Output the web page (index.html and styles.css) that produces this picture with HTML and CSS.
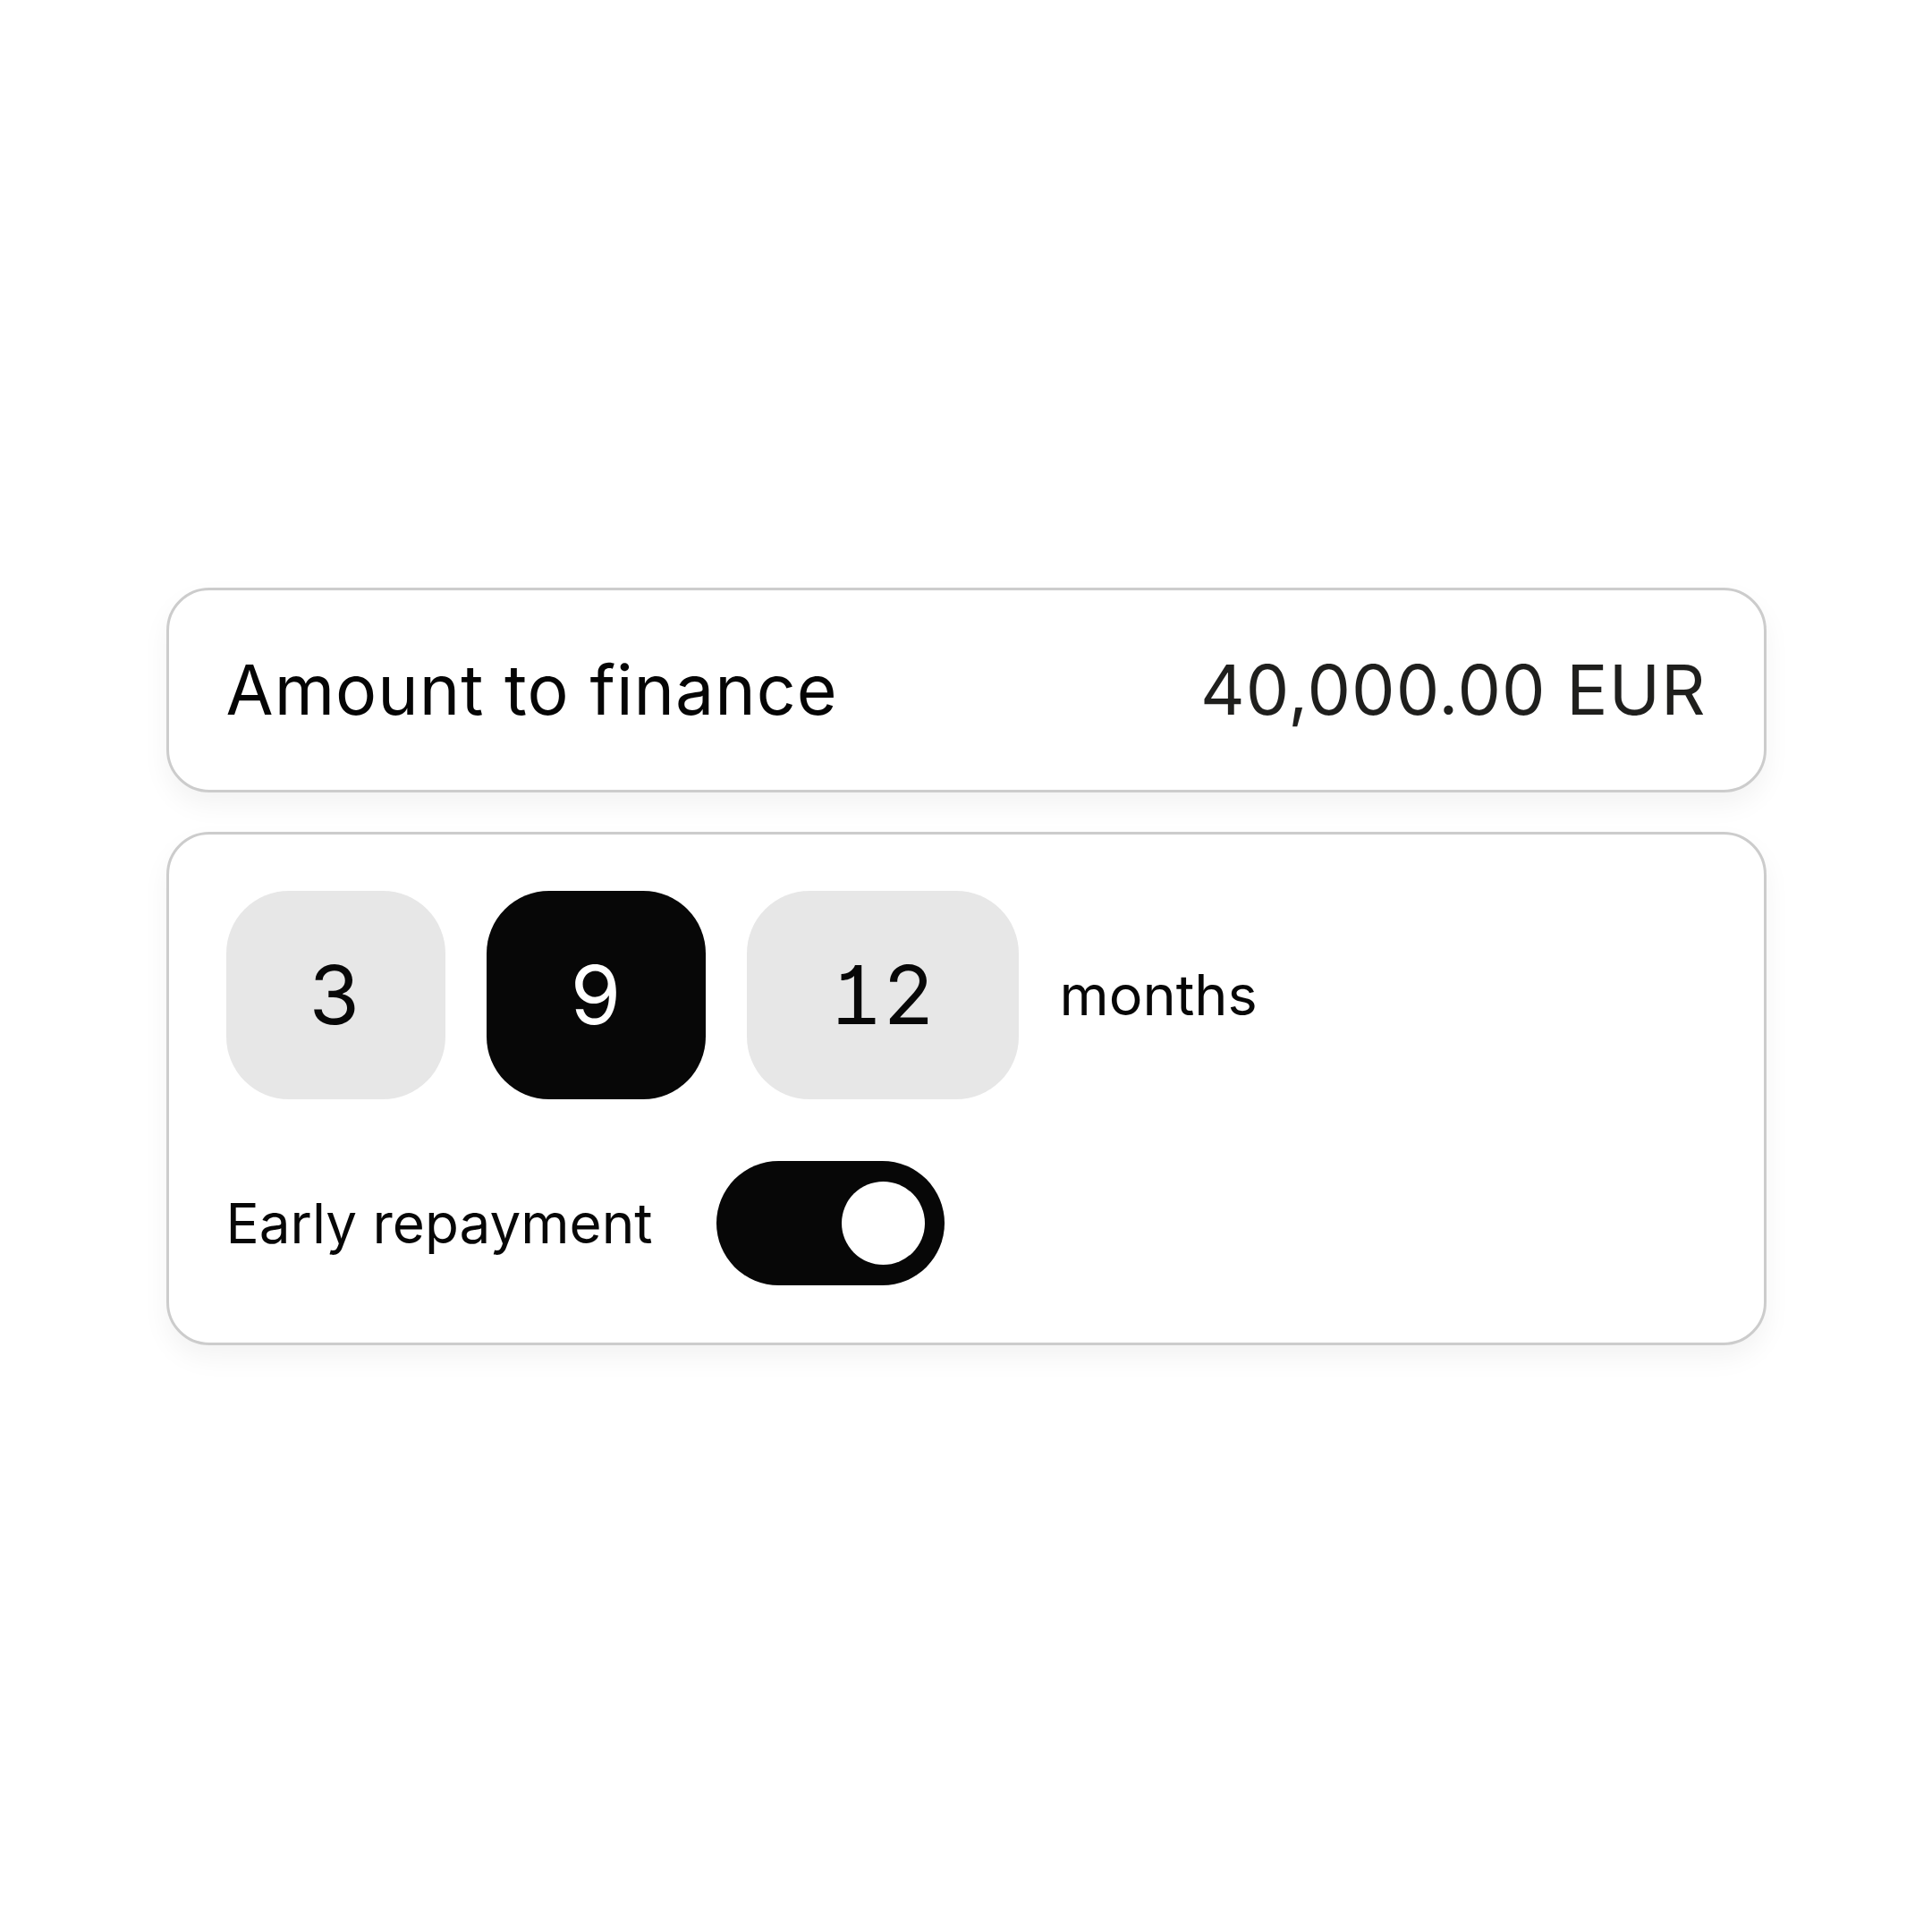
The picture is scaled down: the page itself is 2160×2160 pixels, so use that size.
FILE: index.html
```html
<!DOCTYPE html>
<html lang="en">
<head>
<meta charset="utf-8">
<title>Financing options</title>
<link rel="stylesheet" href="styles.css">
</head>
<body>
  <main class="page">
    <section class="stack">
      <div class="card amount-card">
        <span class="amount-label">Amount to finance</span>
        <span class="amount-value">40,000.00 EUR</span>
      </div>
      <div class="card options-card">
        <div class="term-row">
          <button class="term">3</button>
          <button class="term term-active">9</button>
          <button class="term">12</button>
          <span class="term-unit">months</span>
        </div>
        <div class="toggle-row">
          <span class="toggle-label">Early repayment</span>
          <span class="switch switch-on"><span class="knob"></span></span>
        </div>
      </div>
    </section>
  </main>
</body>
</html>
```
FILE: styles.css
```css
* { box-sizing: border-box; }

html, body {
  margin: 0;
  padding: 0;
  background: #ffffff;
}

body {
  font-family: Inter, "Liberation Sans", Arial, sans-serif;
  font-feature-settings: "cv01" 1;
  color: #070707;
}

.page {
  min-height: 100vh;
  display: flex;
  align-items: center;
  justify-content: center;
}

.stack {
  width: 1789px;
  display: flex;
  flex-direction: column;
  gap: 44px;
}

.card {
  background: #ffffff;
  border: 3px solid #cccccc;
  border-radius: 48px;
  box-shadow: 0 14px 30px rgba(0, 0, 0, 0.05);
}

.amount-card {
  height: 229px;
  padding: 0 64px;
  display: flex;
  align-items: center;
  justify-content: space-between;
}

.amount-label {
  font-size: 77px;
  letter-spacing: 1px;
  color: #050505;
}

.amount-value {
  font-size: 77px;
  letter-spacing: 1px;
  color: #1f1f1d;
}

.options-card {
  padding: 63px 64px 64px;
  display: flex;
  flex-direction: column;
  gap: 69px;
}

.term-row {
  display: flex;
  align-items: center;
  gap: 46px;
}

.term {
  height: 233px;
  padding: 0 93px;
  border: none;
  border-radius: 70px;
  background: #e7e7e7;
  color: #070707;
  font-family: inherit;
  font-feature-settings: "cv01" 1, "tnum" 1;
  font-size: 91px;
  line-height: 1;
  display: flex;
  align-items: center;
  justify-content: center;
}

.term-active {
  background: #070707;
  color: #ffffff;
}

.term-unit {
  font-size: 63px;
}

.toggle-row {
  display: flex;
  align-items: center;
  gap: 71px;
}

.toggle-label {
  font-size: 62px;
}

.switch {
  width: 255px;
  height: 139px;
  border-radius: 70px;
  background: #070707;
  display: flex;
  align-items: center;
  justify-content: flex-end;
  padding-right: 22px;
}

.knob {
  width: 93px;
  height: 93px;
  border-radius: 50%;
  background: #ffffff;
}
```
